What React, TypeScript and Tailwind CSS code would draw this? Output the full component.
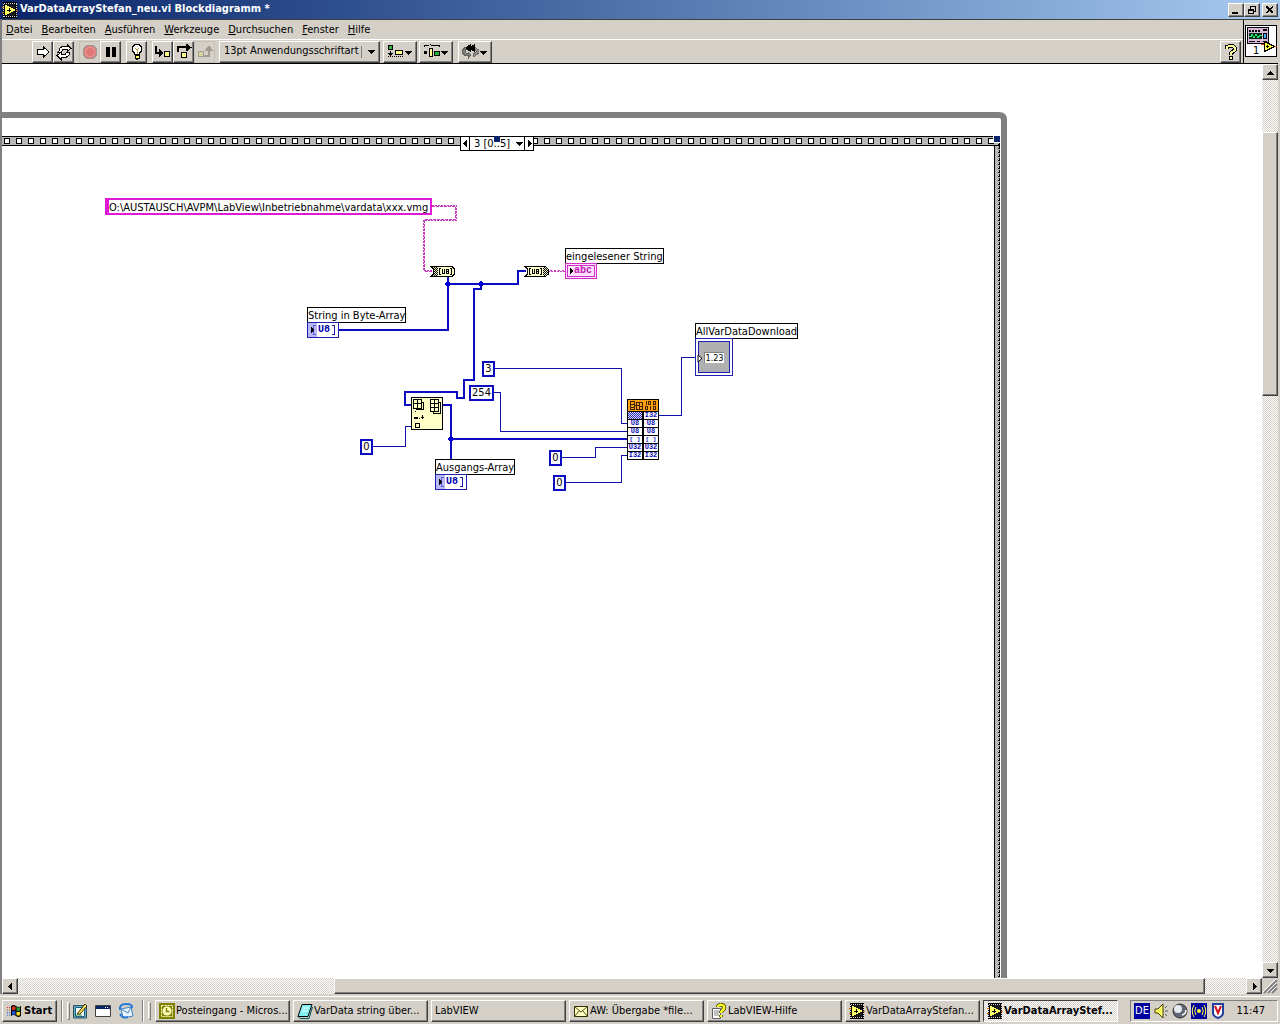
import React from 'react';
import clsx from 'clsx';

const raised = 'bg-[#d4d0c8] border border-t-white border-l-white border-r-[#404040] border-b-[#404040] shadow-[inset_-1px_-1px_0_#808080]';
const dither = 'bg-[repeating-conic-gradient(#ffffff_0_25%,#d4d0c8_0_50%)] bg-[length:2px_2px]';

const menus = ['Datei', 'Bearbeiten', 'Ausführen', 'Werkzeuge', 'Durchsuchen', 'Fenster', 'Hilfe'];

function ViIcon() {
    return (
        <svg width="16" height="16" viewBox="0 0 16 16" shapeRendering="crispEdges" className="shrink-0">
            <path d="M1 0H15V16H1Z" fill="#000" />
            <path d="M2 1.5H15M2 14.5H15" stroke="#d8d8d8" strokeDasharray="1 1" />
            <path d="M1.5 2V15M14.5 2V15" stroke="#d8d8d8" strokeDasharray="1 1" />
            <path d="M3 2H13V14H3Z" fill="#181818" />
            <path d="M3 3H5V4H7V5H9V6H11V7H13V9H11V10H9V11H7V12H5V13H3Z" fill="#ffff66" />
            <path d="M5 8H9M7 6V10" stroke="#000" />
            <path d="M0 5.5H2M0 10.5H2M14 8.5H16" stroke="#e07000" />
        </svg>
    );
}

function Arrow({ dir }: { dir: 'up' | 'down' | 'left' | 'right' }) {
    const paths = {
        up: 'M3 2h1v1h1v1h1v1h1v1H0V5h1V4h1V3h1z',
        down: 'M0 2h7v1H6v1H5v1H4v1H3V5H2V4H1V3H0z',
        left: 'M5 0v7H4V6H3V5H2V4H1V3h1V2h1V1h1V0z',
        right: 'M2 0h1v1h1v1h1v1h1v1H5v1H4v1H3v1H2z',
    };
    return (
        <svg width="7" height="7" viewBox="0 0 7 7" shapeRendering="crispEdges" className="shrink-0">
            <path d={paths[dir]} fill="#000" />
        </svg>
    );
}

function WindowButton({ label, children, className }: { label: string; children: React.ReactNode; className?: string }) {
    return (
        <button aria-label={label} className={clsx(raised, 'w-4 h-3.5 grid place-items-center', className)}>
            <svg width="12" height="10" viewBox="0 0 12 10" shapeRendering="crispEdges" fill="none" stroke="#000">
                {children}
            </svg>
        </button>
    );
}

function TitleBar() {
    return (
        <header className="h-[19px] shrink-0 flex items-center pl-0.5 pr-0.5 bg-linear-to-r from-[#0a246a] to-[#a6caf0]">
            <ViIcon />
            <h1 className="ml-0.5 grow text-[11px] font-bold text-white whitespace-nowrap">VarDataArrayStefan_neu.vi Blockdiagramm *</h1>
            <WindowButton label="Minimieren">
                <path d="M2 8H8" strokeWidth="2" />
            </WindowButton>
            <WindowButton label="Wiederherstellen">
                <path d="M4 1H10M4.5 1V4M9.5 1V6M8 6.5H10M4 1.5H10" />
                <path d="M2 4.5H8M2 5.5H8M2.5 4V9M7.5 4V9M2 8.5H8" />
            </WindowButton>
            <WindowButton label="Schließen" className="ml-0.5">
                <path d="M2.5 1.5L9 8M9 1.5L2.5 8" strokeWidth="2" />
            </WindowButton>
        </header>
    );
}

function ToolButton({ label, off, wide, children }: { label: string; off?: boolean; wide?: boolean; children: React.ReactNode }) {
    return (
        <button
            aria-label={label}
            disabled={off}
            className={clsx('h-[22px] shrink-0 flex items-center justify-center', wide ? 'w-[34px]' : 'w-[21px]', off ? 'border border-[#c4c0b8]' : raised)}
        >
            <svg width={wide ? 30 : 18} height="18" viewBox={wide ? '0 0 30 18' : '0 0 18 18'} shapeRendering="crispEdges" fill="none" stroke="#000">
                {children}
                {wide && <path d="M20 8h7v1h-1v1h-1v1h-1v1h-1v-1h-1v-1h-1V9h-1z" fill="#000" stroke="none" />}
            </svg>
        </button>
    );
}

function Toolbar() {
    return (
        <div className="h-6 flex items-center pl-[30px] pr-0.5 border-t border-white" role="toolbar">
            <ToolButton label="Ausführen">
                <path d="M3 6.5H9V3.5L15 9L9 14.5V11.5H3Z" fill="#fff" />
            </ToolButton>
            <ToolButton label="Wiederholt ausführen">
                <path d="M4 8V6L7 3.5H12V1.5L16 5.5L12 8.5V6.5H8L6 9H3Z" fill="#fff" />
                <path d="M14 9V12L11 14.5H6V16.5L2 12.5L6 9.5V11.5H10L12 9Z" fill="#fff" />
            </ToolButton>
            <div className="w-[5px]" />
            <ToolButton label="Abbrechen" off>
                <path d="M6 2.5H12L15.5 6V12L12 15.5H6L2.5 12V6Z" fill="#e07878" stroke="#a09890" />
                <path d="M7 4.5H11L13.5 7V11L11 13.5H7L4.5 11V7Z" stroke="#e89090" />
            </ToolButton>
            <ToolButton label="Pause">
                <path d="M6 4V14M12 4V14" strokeWidth="4" />
            </ToolButton>
            <div className="w-[5px]" />
            <ToolButton label="Highlight-Funktion">
                <path d="M6.5 11.5V10L4.5 8V4L7 1.5H11L13.5 4V8L11.5 10V11.5Z" fill="#fff" />
                <path d="M7 5L9 7L11 5M9 7V11" stroke="#b8a040" />
                <path d="M7 12H11V15H7Z" fill="#ffff66" />
                <path d="M8 16.5H10" />
            </ToolButton>
            <div className="w-[5px]" />
            <ToolButton label="Hineinspringen">
                <path d="M2 3V10H7" strokeWidth="2" />
                <path d="M5 6L9 10L5 14Z" fill="#000" />
                <path d="M10.5 8.5H15.5V13.5H10.5Z" fill="#ffff88" />
            </ToolButton>
            <ToolButton label="Überspringen">
                <path d="M3 9V4H12" strokeWidth="2" />
                <path d="M11 1L16 4.5L11 8Z" fill="#000" />
                <path d="M6.5 9.5H11.5V14.5H6.5Z" fill="#ffff88" />
            </ToolButton>
            <ToolButton label="Herausspringen" off>
                <path d="M2.5 8.5H7.5V13.5H2.5Z" stroke="#a09c94" fill="#d8d4a0" />
                <path d="M8 13H13V6" stroke="#a09c94" strokeWidth="2" />
                <path d="M10 7L13 3L16 7Z" fill="#a09c94" stroke="#a09c94" />
            </ToolButton>
            <div className={clsx(raised, 'relative ml-1 w-[161px] h-[22px] shrink-0 flex items-center')}>
                <select aria-label="Schriftart" className="w-full h-full pl-1 text-[11px] appearance-none bg-transparent outline-none">
                    <option>13pt Anwendungsschriftart</option>
                </select>
                <span className="absolute right-1 top-1 h-3 w-3.5 flex items-center justify-end border-l border-[#808080] pointer-events-none">
                    <Arrow dir="down" />
                </span>
            </div>
            <div className="w-[3px]" />
            <ToolButton label="Objekte ausrichten" wide>
                <path d="M3.500 2.500H7.500V6.500H3.500Z" fill="#30b040" />
                <path d="M5.500 8V13M3 10.500H8M4 11.500H7" />
                <path d="M3 13.500H18" strokeDasharray="1 1" />
                <path d="M10.500 7.500H17.500V11.500H10.500Z" fill="#ffff88" />
            </ToolButton>
            <div className="w-0.5" />
            <ToolButton label="Objekte verteilen" wide>
                <path d="M3 3.500V2.500H8M10 2.500H18V3.500M9.500 1V2" />
                <path d="M3 8H6V11H3Z" fill="#000" stroke="none" />
                <path d="M8.500 5.500H11.500V13.500H8.500Z" fill="#ffff88" />
                <path d="M13.500 8.500H18.500V12.500H13.500Z" fill="#20b030" />
            </ToolButton>
            <div className="w-[5px]" />
            <ToolButton label="Neu ordnen" wide>
                <path d="M8 4.500H5L2.500 7V10L5 12.500H8V15.500L11 12L8 9V10H6L5 9V7.500L6 6.500H8Z" fill="#808080" stroke="#606060" />
                <path d="M13 4.500H15L18.500 7V10L15 13H13V11L16 9V8L14 6.500" fill="#909090" stroke="#707070" />
                <path d="M10 2L6 5L10 8ZM14 2L10 5L14 8Z" fill="#000" />
            </ToolButton>
            <div className="grow" />
            <ToolButton label="Kontexthilfe">
                <path d="M5 6V4L7 3H11L13 5V7L9 10V12" strokeWidth="4" />
                <path d="M7.500 13.500H10.500V16.500H7.500Z" fill="#ffff99" />
                <path d="M5 6V4L7 3H11L13 5V7L9 10V12" stroke="#ffff99" strokeWidth="2" />
            </ToolButton>
        </div>
    );
}

function ConnectorIcon() {
    return (
        <div className="w-[35px] shrink-0 border-l border-black pl-px pt-[5px]">
            <svg width="32" height="32" viewBox="0 0 32 32" shapeRendering="crispEdges">
                <path d="M.5 .5H31.5V31.5H.5Z" fill="#fff" stroke="#000" />
                <path d="M2.5 2.5H23.5V18.5H2.5Z" fill="#d8b8d8" stroke="#000" />
                <path d="M4 5.5H16" stroke="#000" strokeWidth="2" strokeDasharray="2 1" />
                <path d="M4 16.5H10M12 16.5H15M18 16.5H22" stroke="#000" />
                <path d="M4 8H17V14H4Z" fill="#003018" />
                <path d="M4 11.5H6L7 9.5L9 12.5L11 9.5L13 12.5L15 10.5H17" fill="none" stroke="#30e070" />
                <path d="M18 4H22V6H18Z" fill="#000" />
                <path d="M18.5 8.5H21.5V13.5H18.5Z" fill="#40b0ff" stroke="#000" />
                <path d="M19.5 16.5V26.5L29.5 21.5Z" fill="#ffff40" stroke="#000" />
                <path d="M21 21.5H24M22.5 20V23" stroke="#000" />
                <path d="M16 19.5H19M30 21.5H32" stroke="#e04000" />
                <text x="8" y="29" fontSize="11" fill="#000">1</text>
            </svg>
        </div>
    );
}

function Numeric({ children, className }: { children: string; className: string }) {
    return <span className={clsx('absolute h-4 border-2 border-[#0c0cc0] bg-white text-[11px] leading-3 text-center', className)}>{children}</span>;
}

function NodeLabel({ children, className }: { children: string; className: string }) {
    return <span className={clsx('absolute h-4 border border-black bg-white text-[11px] leading-[15px] whitespace-nowrap', className)}>{children}</span>;
}

function ByteTerminal({ className }: { className: string }) {
    return (
        <span className={clsx('absolute w-8 h-4 flex items-center border border-[#2020b0] bg-white font-mono text-[10px] leading-3 font-bold text-[#0000b0]', className)}>
            <svg width="9" height="14" viewBox="0 0 9 14" shapeRendering="crispEdges">
                <path d="M0 0H9V14H0Z" fill="#b8b8f8" />
                <path d="M8 2.5H5.5V11.5H8" fill="none" stroke="#6060d0" />
                <path d="M3 4V10L6 7Z" fill="#000" />
            </svg>
            <span className="ml-px">U8</span>
            <svg width="5" height="14" viewBox="0 0 5 14" shapeRendering="crispEdges" className="ml-0.5">
                <path d="M0 2.5H2.5V11.5H0" fill="none" stroke="#2020b0" />
            </svg>
        </span>
    );
}

// byte array <-> string conversion function
function Converter({ x, flip }: { x: number; flip?: boolean }) {
    return (
        <g transform={`translate(${x} 266)`}>
            <path d={flip ? 'M0 .5H20L23.5 4V8L20 10.5H0L2.5 8V3Z' : 'M0 .5H21L23.5 3V8L21 10.5H0L2.5 8V3Z'} fill="#ffffc8" stroke="#000" />
            <path d={flip ? 'M18 1H21L23 4V8L21 10H18Z' : 'M1 1H7V10H1L3 8V3Z'} fill="url(#checker)" />
            <path d={flip ? 'M6 2.5H4.5V8.5H6M15 2.5H16.5V8.5H15' : 'M10 2.5H8.5V8.5H10M19 2.5H20.5V8.5H19'} stroke="#000" fill="none" />
            <path d={flip ? 'M7.5 3V7.5H9.5V3M11.5 3.5H13.5V7.5H11.5ZM11.5 5.5H13.5' : 'M11.5 3V7.5H13.5V3M15.5 3.5H17.5V7.5H15.5ZM15.5 5.5H17.5'} stroke="#000" fill="none" />
        </g>
    );
}

// drawn in window coordinates, the origin of the pane is 2/64
function Wires() {
    return (
        <svg width="1260" height="914" viewBox="2 64 1260 914" shapeRendering="crispEdges" fill="none" className="absolute left-0 top-0">
            <defs>
                <pattern id="checker" width="2" height="2" patternUnits="userSpaceOnUse">
                    <path d="M0 0H2V2H0Z" fill="#e8e8b8" />
                    <path d="M0 0H1V1H0ZM1 1H2V2H1Z" fill="#000" />
                </pattern>
                <pattern id="gray" width="2" height="2" patternUnits="userSpaceOnUse">
                    <path d="M0 0H2V2H0Z" fill="#c4c4c4" />
                    <path d="M0 0H1V1H0ZM1 1H2V2H1Z" fill="#acacac" />
                </pattern>
                <pattern id="film" x="400" y="136" width="12" height="10" patternUnits="userSpaceOnUse">
                    <path d="M0 0H12V10H0Z" fill="#b8b8b8" />
                    <path d="M0 .5H12M0 9.5H12" stroke="#000" />
                    <path d="M.5 2.5H5.5V7.5H.5Z" fill="#fff" stroke="#000" />
                </pattern>
            </defs>

            <path d="M0 115H999Q1004 115 1004 120V980" stroke="#808080" strokeWidth="6" shapeRendering="auto" />
            <path d="M0 136H1000V146H0Z" fill="url(#film)" />
            <path d="M995 146H1000V980H995Z" fill="url(#gray)" />
            <path d="M994.5 145V980" stroke="#000" />
            <path d="M999.5 142V980" stroke="#000" strokeDasharray="3 1" />
            <path d="M998.5 144V980" stroke="#000" strokeDasharray="1 3" />
            <path d="M993 135H1001V143H993Z" fill="#fff" />
            <path d="M994 136H1000V142H994Z" fill="#0a246a" />

            <g stroke="#c838c0">
                <path d="M432 206.5H455.5V219.5H424.5V271.5H432" strokeDasharray="3 1" />
                <path d="M432 205.5H456.5V220.5H423.5V270.5H432" strokeDasharray="2 1" />
                <path d="M548 271.5H566" strokeDasharray="2 1" />
                <path d="M550 270.5H566" strokeDasharray="2 2" />
            </g>
            <g stroke="#0c0cc0" strokeWidth="2">
                <path d="M448 277V330H338" />
                <path d="M448 284H518V271H526" />
                <path d="M481 284V289H474V380H464V398H457V392H405V405H411" />
                <path d="M443 405H451V460M451 439H628" />
            </g>
            <g stroke="#1010a8">
                <path d="M372 446.5H405.5V426.5H411" />
                <path d="M495 368.5H621.5V423.5H628" />
                <path d="M493 392.5H500.5V431.5H628" />
                <path d="M561 457.5H595.5V447.5H628" />
                <path d="M565 482.5H621.5V455.5H628" />
                <path d="M659 415.5H681.5V357.5H697" />
            </g>
            <g fill="#0000d0">
                <path d="M447 281h2v1h1v1h1v2h-1v1h-1v1h-2v-1h-1v-1h-1v-2h1v-1h1z" />
                <path d="M480 281h2v1h1v1h1v2h-1v1h-1v1h-2v-1h-1v-1h-1v-2h1v-1h1z" />
                <path d="M450 436h2v1h1v1h1v2h-1v1h-1v1h-2v-1h-1v-1h-1v-2h1v-1h1z" />
            </g>

            <Converter x={431} />
            <Converter x={525} flip />

            <g stroke="#000">
                <path d="M411.5 397.5H442.5V429.5H411.5Z" fill="#ffffc8" />
                <path d="M416.5 402.5H423.5V409.5H416.5Z" fill="#ffffc8" />
                <path d="M413.5 399.5H421.5V408.5H413.5ZM417.5 399V408M413 403.5H421" fill="#ffffc8" />
                <path d="M433.5 402.5H440.5V413.5H433.5Z" fill="#ffffc8" />
                <path d="M430.5 399.5H438.5V411.5H430.5ZM434.5 399V411M430 403.5H438M430 407.5H438" fill="#ffffc8" />
                <path d="M414 418H418" strokeWidth="2" />
                <path d="M419 418.5H420M421 417.5H424M422.5 415V419M415 411.5H416" />
                <path d="M415.5 423.5H419.5V427.5H415.5Z" />
            </g>
        </svg>
    );
}

const rows = [
    ['', 'I32'],
    ['U8', 'U8'],
    ['U8', 'U8'],
    ['[ ]', '[ ]'],
    ['U32', 'U32'],
    ['I32', 'I32'],
];

function CallLibraryNode() {
    return (
        <div className="absolute left-[625px] top-[335px] w-8 border border-black bg-black">
            <svg width="30" height="11" viewBox="0 0 30 11" shapeRendering="crispEdges" fill="none" stroke="#402000" className="block">
                <path d="M0 0H30V11H0Z" fill="#ffa010" stroke="none" />
                <path d="M2.5 1.5H6.5V9.5H2.5ZM2 4.5H6M2 7.5H6M6 5.5H8M8.5 2.5H11.5V9.5H8.5ZM8 5.5H11M11.5 2.5H14.5V9.5H11.5M12 6.5H14" />
                <path d="M18.5 1V5M20.5 1.5H22.5V4.5H20.5ZM25.5 1.5H27.5V4.5H25.5ZM17.5 6.5H19.5V9.5H17.5ZM22.5 6V10M25.5 6.5H27.5V9.5H25.5Z" />
            </svg>
            <div className="grid grid-cols-2 gap-x-0.5 gap-y-px pt-px">
                {rows.flat().map((t, i) => (
                    <span
                        key={i}
                        className={clsx(
                            'h-[7px] overflow-hidden text-center font-mono font-bold leading-[7px] text-[#1010b8]',
                            t === '[ ]' ? 'text-[6px]' : 'text-[7px]',
                            t ? 'bg-white' : 'bg-[repeating-conic-gradient(#2828b8_0_25%,#e0e0ff_0_50%)] bg-[length:2px_2px]',
                        )}
                    >
                        {t}
                    </span>
                ))}
            </div>
        </div>
    );
}

function Diagram() {
    return (
        <main className="relative grow overflow-hidden bg-white">
            <Wires />

            <div className="absolute left-[458px] top-[72px] w-[74px] h-[15px] flex border border-black bg-white">
                <button aria-label="Voriger Rahmen" className="w-2 grid place-items-center">
                    <Arrow dir="left" />
                </button>
                <select aria-label="Rahmen" className="grow pl-1 text-[11px] leading-3 appearance-none border-x border-black outline-none">
                    <option>3 [0..5]</option>
                </select>
                <button aria-label="Nächster Rahmen" className="w-2 grid place-items-center">
                    <Arrow dir="right" />
                </button>
                <span className="absolute right-[10px] top-[3px] pointer-events-none">
                    <Arrow dir="down" />
                </span>
                <span className="absolute left-[33px] -top-px size-1.5 bg-[#0a246a]" />
            </div>

            <span className="absolute left-[103px] top-[134px] w-[327px] h-[17px] border-2 border-l-4 border-[#e018d8] bg-white text-[11px] leading-[15px] whitespace-nowrap">
                O:\AUSTAUSCH\AVPM\LabView\Inbetriebnahme\vardata\xxx.vmg
            </span>

            <NodeLabel className="left-[563px] top-[184px]">eingelesener String</NodeLabel>
            <span className="absolute left-[563px] top-[199px] w-8 h-4 p-px border border-[#d030c8] bg-[#ffe0ff]">
                <span className="relative flex h-3 items-center justify-center border border-[#d030c8] font-mono text-[10px] font-bold leading-3 text-[#c020b8]">
                    <svg width="4" height="6" viewBox="0 0 4 6" shapeRendering="crispEdges">
                        <path d="M0 0L4 3L0 6Z" fill="#000" />
                    </svg>
                    abc
                </span>
            </span>

            <NodeLabel className="left-[305px] top-[243px]">String in Byte-Array</NodeLabel>
            <ByteTerminal className="left-[305px] top-[258px]" />
            <NodeLabel className="left-[433px] top-[395px]">Ausgangs-Array</NodeLabel>
            <ByteTerminal className="left-[433px] top-[410px]" />

            <Numeric className="left-[480px] top-[297px] w-[13px]">3</Numeric>
            <Numeric className="left-[467px] top-[321px] w-[25px]">254</Numeric>
            <Numeric className="left-[358px] top-[375px] w-[13px]">0</Numeric>
            <Numeric className="left-[547px] top-[386px] w-[13px]">0</Numeric>
            <Numeric className="left-[551px] top-[411px] w-[13px]">0</Numeric>

            <CallLibraryNode />

            <NodeLabel className="left-[693px] top-[259px]">AllVarDataDownload</NodeLabel>
            <div className="absolute left-[693px] top-[274px] w-[38px] h-[38px] p-0.5 border border-[#2020b0] bg-white">
                <div className="relative h-full grid place-items-center border border-[#2020b0] bg-[#b0b0b0]">
                    <span className="border-t border-l border-[#808080] bg-white text-[9px] leading-[10px]">1.23</span>
                    <svg width="6" height="9" viewBox="0 0 6 9" className="absolute -left-0.5 top-3">
                        <path d="M1 1V8L5 4.5Z" fill="#fff" stroke="#000" />
                    </svg>
                </div>
            </div>
        </main>
    );
}

function ScrollButton({ label, dir }: { label: string; dir: 'up' | 'down' | 'left' | 'right' }) {
    return (
        <button aria-label={label} className={clsx(raised, 'size-4 shrink-0 grid place-items-center')}>
            <Arrow dir={dir} />
        </button>
    );
}

function TaskButton({ icon, title, active }: { icon?: React.ReactNode; title: string; active?: boolean }) {
    return (
        <button
            className={clsx(
                'h-[22px] flex-1 min-w-0 flex items-center gap-px pl-[3px] pr-1 text-[11px] text-left',
                active ? clsx(dither, 'font-bold border border-t-[#404040] border-l-[#404040] border-r-white border-b-white') : raised,
            )}
        >
            {icon}
            <span className="pt-0.5 whitespace-nowrap">{title}</span>
        </button>
    );
}

function Icon16({ children }: { children: React.ReactNode }) {
    return (
        <svg width="16" height="16" viewBox="0 0 16 16" className="shrink-0" fill="none">
            {children}
        </svg>
    );
}

const tasks = [
    {
        title: 'Posteingang - Micros...',
        icon: (
            <Icon16>
                <path d="M0 0H16V16H0Z" fill="#808000" />
                <path d="M2.5 2.5H13.5V13.5H2.5Z" stroke="#ffffc0" strokeDasharray="2 1" />
                <circle cx="8" cy="8" r="4.5" fill="#ffffc0" />
                <path d="M7.5 5V8.5H10.5" stroke="#808000" strokeWidth="1.5" />
            </Icon16>
        ),
    },
    {
        title: 'VarData string über...',
        icon: (
            <Icon16>
                <path d="M5 1.5H15L11 13.5H1Z" fill="#80f0f0" stroke="#000" />
                <path d="M1 13.5L3 15.5H12L15.5 4" stroke="#005060" />
                <path d="M6 5H12M5 8H11" stroke="#fff" />
            </Icon16>
        ),
    },
    { title: 'LabVIEW' },
    {
        title: 'AW: Übergabe *file...',
        icon: (
            <Icon16>
                <path d="M1.5 3.5H14.5V13.5H1.5Z" fill="#ffffc0" stroke="#303000" />
                <path d="M1.5 3.5L8 9L14.5 3.5M1.5 13.5L6 8M14.5 13.5L10 8" stroke="#505020" />
            </Icon16>
        ),
    },
    {
        title: 'LabVIEW-Hilfe',
        icon: (
            <Icon16>
                <path d="M1.5 5.5H9.5V15.5H1.5Z" fill="#fff" stroke="#606060" />
                <path d="M3 8H8M3 10H8M3 12H8" stroke="#808080" />
                <path d="M7 4C7 1 14 1 13 5C13 7 10 7 10 10M10 12V14" stroke="#404000" strokeWidth="4" />
                <path d="M7 4C7 1 14 1 13 5C13 7 10 7 10 10M10 12V14" stroke="#ffff20" strokeWidth="2.5" />
            </Icon16>
        ),
    },
    { title: 'VarDataArrayStefan...', icon: <ViIcon /> },
    { title: 'VarDataArrayStef...', icon: <ViIcon />, active: true },
];

function Grip() {
    return (
        <div className="flex gap-1 h-[22px] shrink-0">
            <div className="w-0.5 border-l border-[#808080] border-r border-r-white" />
            <div className="w-[3px] my-0.5 border border-t-white border-l-white border-r-[#808080] border-b-[#808080]" />
        </div>
    );
}

function Taskbar() {
    return (
        <footer className="h-7 shrink-0 flex items-center pl-0.5 pr-0.5 border-t border-white bg-[#d4d0c8]">
            <button className={clsx(raised, 'w-[55px] h-[22px] shrink-0 flex items-center gap-0.5 pl-[3px] text-[11px] font-bold')}>
                <Icon16>
                    <path d="M5 3Q8 1 10 3T15 3V13Q12 15 10 13T5 13Z" fill="#000" />
                    <path d="M6 4Q8 2.500 9.500 4V7.500Q8 6 6 7.500Z" fill="#e03020" />
                    <path d="M10.500 4Q12 5 14 4V7.500Q12 8.500 10.500 7.500Z" fill="#20a030" />
                    <path d="M6 8.500Q8 7 9.500 8.500V12Q8 11 6 12Z" fill="#2050e0" />
                    <path d="M10.500 8.500Q12 9.500 14 8.500V12Q12 13 10.500 12Z" fill="#ffe020" />
                    <path d="M1 4.500H4M1 7H4" stroke="#e03020" strokeDasharray="1 1" />
                    <path d="M1 9.500H4M1 12H4" stroke="#2050e0" strokeDasharray="1 1" />
                </Icon16>
                <span className="pt-0.5">Start</span>
            </button>
            <div className="ml-1 mr-0.5">
                <Grip />
            </div>
            <nav className="flex gap-[7px] shrink-0 mr-2" aria-label="Schnellstart">
                <button aria-label="Desktop anzeigen">
                    <Icon16>
                        <path d="M1.500 2.500H14.500V15H1.500Z" fill="#58b0c0" stroke="#305060" />
                        <path d="M3.500 4.500H12.500V13.500H3.500Z" fill="#fff" stroke="#206080" />
                        <path d="M5 11L13 1L15 3L8 11Z" fill="#ffe060" stroke="#403000" />
                        <path d="M4 12H10" stroke="#208040" />
                    </Icon16>
                </button>
                <button aria-label="Fenster">
                    <Icon16>
                        <path d="M.5 2.500H15.500V13.500H.5Z" fill="#fff" stroke="#404040" />
                        <path d="M1 3H15V6H1Z" fill="#0a246a" />
                        <path d="M10 4.500H14" stroke="#fff" strokeDasharray="1 1" />
                    </Icon16>
                </button>
                <button aria-label="Outlook Express">
                    <Icon16>
                        <path d="M3 6L13 4L15 13L5 15Z" fill="#e8f4ff" stroke="#4080c0" />
                        <path d="M3 6L10 10L13 4" stroke="#4080c0" />
                        <path d="M2 7Q1 1 8 1T14 5" stroke="#2878d8" strokeWidth="2" />
                        <path d="M2 11Q5 16 10 14" stroke="#2878d8" strokeWidth="2" />
                    </Icon16>
                </button>
            </nav>
            <div className="mr-1">
                <Grip />
            </div>
            <div className="grow flex gap-[3px] min-w-0">
                {tasks.map((t) => (
                    <TaskButton key={t.title} {...t} />
                ))}
            </div>
            <div className="ml-3 w-[148px] h-[22px] shrink-0 flex items-center gap-[3px] pl-[3px] pr-3 border border-t-[#808080] border-l-[#808080] border-r-white border-b-white text-[11px]">
                <span className="w-4 h-4 bg-[#0000a0] text-center leading-4 text-white">DE</span>
                <Icon16>
                    <path d="M2 6H5L10 1V15L5 10H2Z" fill="#ffff60" stroke="#403800" />
                    <path d="M12 5L14 3M12 8H15M12 11L14 13" stroke="#606060" />
                </Icon16>
                <Icon16>
                    <circle cx="8" cy="8" r="7" fill="#606878" stroke="#303030" />
                    <circle cx="6" cy="6" r="4" fill="#e8e8f0" />
                    <path d="M10 12Q14 11 14 7" stroke="#fff" strokeWidth="1.500" />
                </Icon16>
                <Icon16>
                    <path d="M0 0H16V16H0Z" fill="#0000a0" />
                    <circle cx="8" cy="8" r="2" fill="#ffff40" />
                    <path d="M5 4Q2.500 8 5 12M11 4Q13.500 8 11 12M3 2Q-.5 8 3 14M13 2Q16.500 8 13 14" stroke="#ffff40" />
                </Icon16>
                <Icon16>
                    <path d="M3 1H13V10Q13 13 8 15Q3 13 3 10Z" fill="#fff" stroke="#2040a0" strokeWidth="2" />
                    <path d="M5 3L8 10L11 3" stroke="#d01020" strokeWidth="2" />
                </Icon16>
                <time className="ml-auto pt-0.5">11:47</time>
            </div>
        </footer>
    );
}

export default function App() {
    return (
        <div className="h-screen flex flex-col overflow-hidden bg-[#d4d0c8] text-black font-['DejaVu_Sans_Condensed','DejaVu_Sans',sans-serif]">
            <TitleBar />
            <div className="grow min-h-0 flex flex-col border-l-2 border-l-[#808080] border-t border-t-[#404040] pr-0.5">
                <div className="flex shrink-0 border-b border-black">
                    <div className="grow min-w-0">
                        <nav className="h-[19px] flex items-center gap-[9px] pl-1 pt-0.5 text-[11px]">
                            {menus.map((m) => (
                                <button key={m} className="whitespace-nowrap">
                                    <span className="underline">{m[0]}</span>
                                    {m.slice(1)}
                                </button>
                            ))}
                        </nav>
                        <Toolbar />
                    </div>
                    <ConnectorIcon />
                </div>
                <div className="grow min-h-0 flex">
                    <Diagram />
                    <div className={clsx('w-4 shrink-0 flex flex-col', dither)}>
                        <ScrollButton label="Nach oben" dir="up" />
                        <div className="grow pt-[52px]">
                            <div className={clsx(raised, 'h-[264px]')} />
                        </div>
                        <ScrollButton label="Nach unten" dir="down" />
                    </div>
                </div>
                <div className="h-4 shrink-0 flex">
                    <div className={clsx('grow flex', dither)}>
                        <ScrollButton label="Nach links" dir="left" />
                        <div className="grow pl-[316px] pr-[41px]">
                            <div className={clsx(raised, 'h-4')} />
                        </div>
                        <ScrollButton label="Nach rechts" dir="right" />
                    </div>
                    <svg width="16" height="16" viewBox="0 0 16 16" className="shrink-0">
                        <path d="M2 15L15 2M6 15L15 6M10 15L15 10" stroke="#808080" strokeWidth="2" />
                        <path d="M1 14L14 1M5 14L14 5M9 14L14 9" stroke="#fff" />
                    </svg>
                </div>
            </div>
            <div className="h-0.5 shrink-0" />
            <Taskbar />
        </div>
    );
}
